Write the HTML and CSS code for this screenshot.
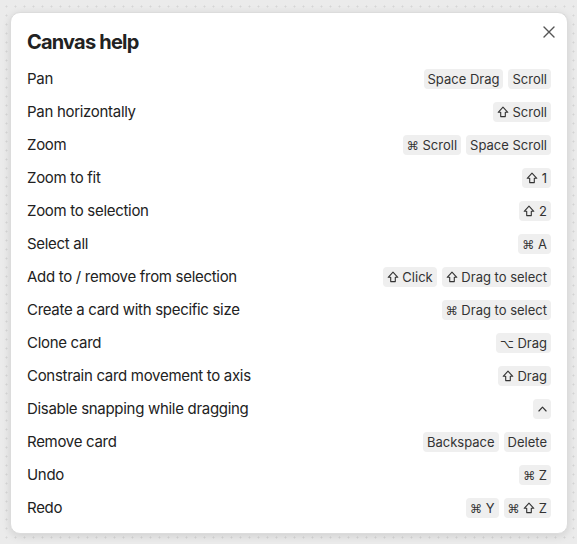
FILE: index.html
```html
<!DOCTYPE html>
<html>
<head>
<meta charset="utf-8">
<link rel="stylesheet" href="styles.css">
</head>
<body>
<div class="modal">
  <button class="close" aria-label="Close">
    <svg width="12" height="12" viewBox="0 0 12 12"><path d="M1 1L11 11M11 1L1 11" stroke="#555" stroke-width="1.4" stroke-linecap="round"/></svg>
  </button>
  <h1 class="title">Canvas help</h1>
  <div class="list">
    <div class="row"><span class="label">Pan</span><span class="keys"><kbd>Space Drag</kbd><kbd>Scroll</kbd></span></div>
    <div class="row"><span class="label">Pan horizontally</span><span class="keys"><kbd><svg class="ico" viewBox="0 0 12 12"><path d="M6 1.2L10.8 6.3H8.3V10.6H3.7V6.3H1.2Z"/></svg> Scroll</kbd></span></div>
    <div class="row"><span class="label">Zoom</span><span class="keys"><kbd><span class="sym">⌘</span> Scroll</kbd><kbd>Space Scroll</kbd></span></div>
    <div class="row"><span class="label">Zoom to fit</span><span class="keys"><kbd><svg class="ico" viewBox="0 0 12 12"><path d="M6 1.2L10.8 6.3H8.3V10.6H3.7V6.3H1.2Z"/></svg> 1</kbd></span></div>
    <div class="row"><span class="label">Zoom to selection</span><span class="keys"><kbd><svg class="ico" viewBox="0 0 12 12"><path d="M6 1.2L10.8 6.3H8.3V10.6H3.7V6.3H1.2Z"/></svg> 2</kbd></span></div>
    <div class="row"><span class="label">Select all</span><span class="keys"><kbd><span class="sym">⌘</span> A</kbd></span></div>
    <div class="row"><span class="label">Add to / remove from selection</span><span class="keys"><kbd><svg class="ico" viewBox="0 0 12 12"><path d="M6 1.2L10.8 6.3H8.3V10.6H3.7V6.3H1.2Z"/></svg> Click</kbd><kbd><svg class="ico" viewBox="0 0 12 12"><path d="M6 1.2L10.8 6.3H8.3V10.6H3.7V6.3H1.2Z"/></svg> Drag to select</kbd></span></div>
    <div class="row"><span class="label">Create a card with specific size</span><span class="keys"><kbd><span class="sym">⌘</span> Drag to select</kbd></span></div>
    <div class="row"><span class="label">Clone card</span><span class="keys"><kbd><span class="sym">⌥</span> Drag</kbd></span></div>
    <div class="row"><span class="label">Constrain card movement to axis</span><span class="keys"><kbd><svg class="ico" viewBox="0 0 12 12"><path d="M6 1.2L10.8 6.3H8.3V10.6H3.7V6.3H1.2Z"/></svg> Drag</kbd></span></div>
    <div class="row"><span class="label">Disable snapping while dragging</span><span class="keys"><kbd class="sq"><svg class="caret" viewBox="0 0 10 6"><path d="M1 5.2L5 1L9 5.2"/></svg></kbd></span></div>
    <div class="row"><span class="label">Remove card</span><span class="keys"><kbd>Backspace</kbd><kbd>Delete</kbd></span></div>
    <div class="row"><span class="label">Undo</span><span class="keys"><kbd><span class="sym">⌘</span> Z</kbd></span></div>
    <div class="row"><span class="label">Redo</span><span class="keys"><kbd><span class="sym">⌘</span> Y</kbd><kbd><span class="sym">⌘</span> <svg class="ico" viewBox="0 0 12 12"><path d="M6 1.2L10.8 6.3H8.3V10.6H3.7V6.3H1.2Z"/></svg> Z</kbd></span></div>
  </div>
</div>
</body>
</html>
```
FILE: styles.css
```css
html, body {
  margin: 0;
  padding: 0;
}
body {
  width: 577px;
  height: 544px;
  background-color: #ebebeb;
  background-image: radial-gradient(circle, #d6d6d6 0.8px, transparent 1.2px);
  background-size: 9px 9px;
  background-position: 2px 2px;
  font-family: "Inter", "Liberation Sans", sans-serif;
  color: #222;
  padding: 12px 9px 0 10px;
  box-sizing: border-box;
}
.modal {
  position: relative;
  width: 558px;
  height: 522px;
  box-sizing: border-box;
  background: #fff;
  border-radius: 10px;
  border: 1px solid #dcdcdc;
  box-shadow: 0 2px 8px rgba(0,0,0,0.12);
  padding: 15px 16px 10px 16px;
}
.close {
  position: absolute;
  top: 12px;
  right: 11px;
  width: 14px;
  height: 14px;
  padding: 0;
  border: 0;
  background: none;
  display: flex;
  align-items: center;
  justify-content: center;
}
.title {
  margin: 0;
  font-size: 20px;
  font-weight: 700;
  line-height: 28px;
  color: #222;
  letter-spacing: -0.8px;
}
.list {
  margin-top: 6px;
  display: flex;
  flex-direction: column;
}
.row {
  height: 33px;
  display: flex;
  align-items: center;
  justify-content: space-between;
}
.label {
  font-size: 15px;
  letter-spacing: -0.3px;
  color: #222;
}
.keys {
  display: flex;
  gap: 5px;
}
kbd {
  font-family: "Inter", "Liberation Sans", sans-serif;
  font-size: 13px;
  line-height: 20px;
  height: 20px;
  padding: 0 4px;
  background: #efefef;
  border-radius: 4px;
  color: #333;
  display: inline-block;
  white-space: pre;
}
kbd.sq {
  width: 18px;
  padding: 0;
  text-align: center;
}
.sym {
  font-family: "DejaVu Sans", sans-serif;
  font-size: 12px;
}
.ico {
  width: 12px;
  height: 12px;
  vertical-align: -1px;
  fill: none;
  stroke: #333;
  stroke-width: 1.1;
  stroke-linejoin: round;
}
.caret {
  width: 9px;
  height: 6px;
  vertical-align: 2px;
  fill: none;
  stroke: #333;
  stroke-width: 1.3;
  stroke-linecap: round;
  stroke-linejoin: round;
}
```
